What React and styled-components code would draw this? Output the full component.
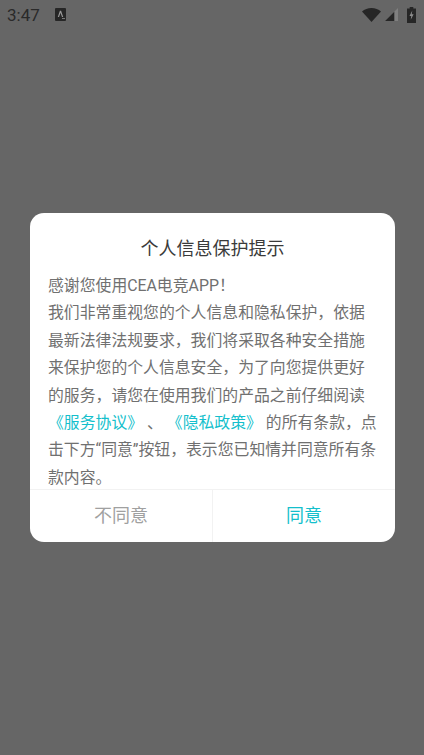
import React from 'react'
import styled, { createGlobalStyle } from 'styled-components'

const GlobalStyle = createGlobalStyle`
  html, body {
    margin: 0;
    padding: 0;
    background: #666666;
  }
`

const Screen = styled.div`
  display: flex;
  flex-direction: column;
  width: 424px;
  height: 755px;
  overflow: hidden;
  background: #666666;
  font-family: Roboto, "Noto Sans CJK SC", sans-serif;
`

const StatusBar = styled.div`
  display: flex;
  align-items: center;
  justify-content: space-between;
  height: 29px;
  padding: 0 8px 0 7px;
`

const StatusGroup = styled.div`
  display: flex;
  align-items: center;
  gap: ${p => p.gap || 0}px;
`

const Clock = styled.span`
  font-size: 17px;
  color: #2a2a2a;
`

const Backdrop = styled.div`
  display: flex;
  flex: 1;
  justify-content: center;
  padding: 184px 29px 0 30px;
`

const Dialog = styled.div`
  display: flex;
  flex-direction: column;
  width: 365px;
  height: 329px;
  border-radius: 14px;
  background: #ffffff;
`

const Title = styled.div`
  padding-top: 22px;
  text-align: center;
  font-size: 18px;
  line-height: 27px;
  color: #3a3a3a;
`

const Body = styled.div`
  flex: 1;
  min-height: 0;
  padding: 10px 18px 0;
  font-size: 15.85px;
  line-height: 27.4px;
  color: #707070;
`

const Line = styled.div`
  white-space: nowrap;
`

const Link = styled.span`
  color: #14bfcc;
`

const Actions = styled.div`
  display: flex;
  flex-shrink: 0;
  height: 52px;
  border-top: 1px solid #f2f2f2;
`

const Action = styled.div`
  display: flex;
  flex: 1;
  align-items: center;
  justify-content: center;
  padding-bottom: 4px;
  font-size: 18px;
  color: ${p => (p.primary ? '#14bfcc' : '#a0a0a0')};
  & + & {
    border-left: 1px solid #f2f2f2;
  }
`

const BatterySlot = styled.div`
  display: flex;
  margin-left: 5px;
`

const StoreIcon = () => (
  <svg width="11" height="13" viewBox="0 0 11 13">
    <rect width="11" height="13" rx="1" fill="#262626" />
    <path d="M2.8 9 4.9 2.8h1.2L8.2 9H7L5.5 4.8 4 9z" fill="#9a9a9a" />
    <rect x="7" y="10" width="3" height="1" fill="#777" />
  </svg>
)

const WifiIcon = () => (
  <svg width="19" height="14" viewBox="0 0 20 14" preserveAspectRatio="none">
    <path d="M0 3.6C2.6 1.3 6.1 0 10 0s7.4 1.3 10 3.6L10 14z" fill="#262626" />
  </svg>
)

const SignalIcon = () => (
  <svg width="13" height="13" viewBox="0 0 14 14">
    <path d="M14 0v14H0z" fill="#808080" />
    <path d="M10 4v10H0z" fill="#262626" />
  </svg>
)

const BatteryIcon = () => (
  <svg width="9" height="16" viewBox="0 0 8 15" preserveAspectRatio="none">
    <path d="M2.4 0h3.2v1.4H8V15H0V1.4h2.4z" fill="#262626" />
    <path d="M4.7 3.2 2.2 8.4h1.6l-.5 3.6 2.6-5.2H4.2z" fill="#8c8c8c" />
  </svg>
)

export default function App() {
  return (
    <Screen>
      <GlobalStyle />
      <StatusBar>
        <StatusGroup gap={15}>
          <Clock>3:47</Clock>
          <StoreIcon />
        </StatusGroup>
        <StatusGroup gap={4}>
          <WifiIcon />
          <SignalIcon />
          <BatterySlot>
            <BatteryIcon />
          </BatterySlot>
        </StatusGroup>
      </StatusBar>
      <Backdrop>
        <Dialog>
          <Title>个人信息保护提示</Title>
          <Body>
            <Line>感谢您使用CEA电竞APP！</Line>
            <Line>我们非常重视您的个人信息和隐私保护，依据</Line>
            <Line>最新法律法规要求，我们将采取各种安全措施</Line>
            <Line>来保护您的个人信息安全，为了向您提供更好</Line>
            <Line>的服务，请您在使用我们的产品之前仔细阅读</Line>
            <Line><Link>《服务协议》</Link> 、 <Link>《隐私政策》</Link> 的所有条款，点</Line>
            <Line>击下方“同意”按钮，表示您已知情并同意所有条</Line>
            <Line>款内容。</Line>
          </Body>
          <Actions>
            <Action>不同意</Action>
            <Action primary>同意</Action>
          </Actions>
        </Dialog>
      </Backdrop>
    </Screen>
  )
}
